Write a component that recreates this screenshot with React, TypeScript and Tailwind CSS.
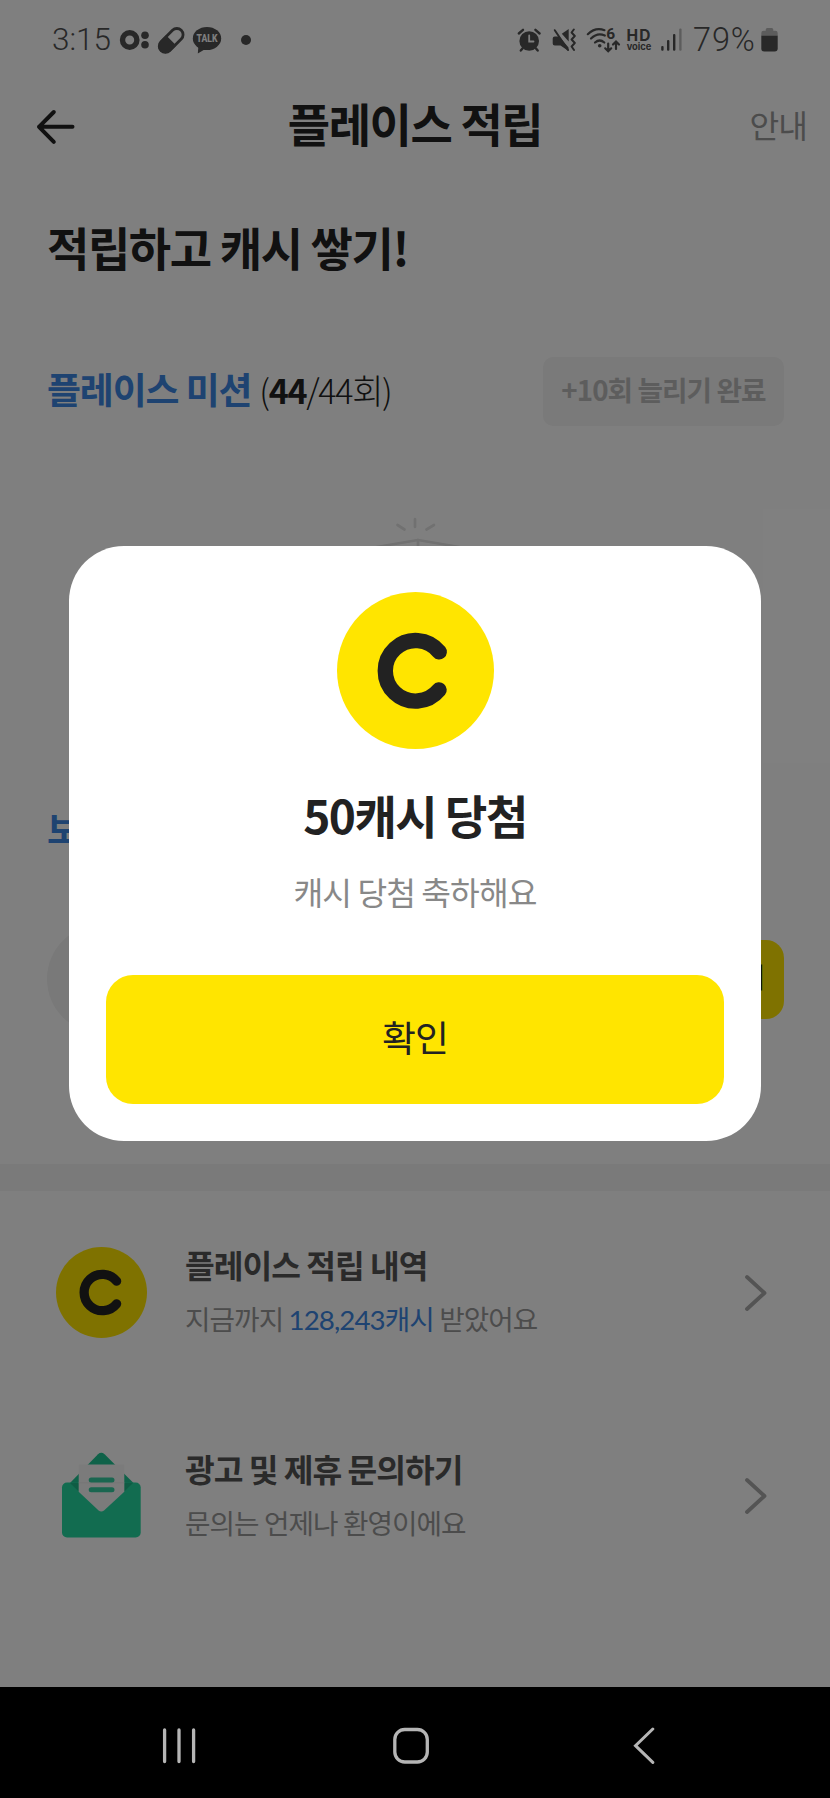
import type { ReactNode } from "react";

const menu = [
  {
    title: "플레이스 적립 내역",
    desc: (
      <>
        지금까지{" "}
        <span className="font-[Lato,'Noto_Sans_CJK_KR',sans-serif] text-[#3c86e2]">128,243캐시</span>{" "}
        받았어요
      </>
    ),
    icon: <CashIcon className="size-[91px]" small />,
  },
  {
    title: "광고 및 제휴 문의하기",
    desc: <>문의는 언제나 환영이에요</>,
    icon: <MailIcon />,
  },
];

function CashIcon({ className, small }: { className: string; small?: boolean }) {
  return (
    <svg viewBox="0 0 100 100" className={className} fill="none">
      <circle cx="50" cy="50" r="50" fill="#ffe500" />
      <path
        d={
          small
            ? "M66.6 37.6A20 20 0 1 0 66.6 62.4"
            : "M65.1 38.1A19.3 19.3 0 1 0 65 62.4"
        }
        stroke="#222"
        strokeWidth={small ? 10.2 : 9.8}
        strokeLinecap="round"
      />
    </svg>
  );
}

function MailIcon() {
  return (
    <svg viewBox="0 0 91 91" className="size-[91px]">
      <path d="M14 33 42 4.200Q45.300 1.500 48.600 4.200L77.500 33V50H14Z" fill="#1fc492" />
      <rect x="6" y="32.500" width="78.700" height="55" rx="5" fill="#25d8a1" />
      <path d="M14 33H22.700V41.500ZM77 33H68.300V41.500Z" fill="#1db888" />
      <path d="M22.700 14.500H68.300V41.800L48 60.500Q45.300 62.500 42.600 60.500L22.700 41.800Z" fill="#f6f6f6" />
      <path d="M22.700 32.800H68.300" stroke="#e9e9e9" strokeWidth="0.800" />
      <path d="M35.200 29.900H56M35.200 39.800H56" stroke="#35cda0" strokeWidth="5" strokeLinecap="round" />
    </svg>
  );
}

function StatusBar() {
  return (
    <div className="flex h-20 items-center pr-[51px] pl-[52px] font-[Roboto] tracking-normal text-[#505050]">
      <span className="w-[67px] text-[31.500px] font-light whitespace-nowrap">3:15</span>
      <svg width="30" height="26" viewBox="0 0 30 26" fill="currentColor">
        <circle cx="10.700" cy="13" r="7.200" fill="none" stroke="currentColor" strokeWidth="5.400" />
        <circle cx="26" cy="8.300" r="3.800" />
        <circle cx="26" cy="17.700" r="3.800" />
      </svg>
      <svg width="30" height="30" viewBox="0 0 30 30" className="ml-[7px]" fill="none">
        <g transform="rotate(45 15 15.300)">
          <rect x="9" y="1" width="12.400" height="28.600" rx="6.200" stroke="currentColor" strokeWidth="2.800" />
          <path d="M8 15.300H22.400V23.400A7.200 7.200 0 0 1 8 23.400Z" fill="currentColor" />
        </g>
      </svg>
      <svg width="30" height="30" viewBox="0 0 30 30" className="ml-1.5">
        <ellipse cx="15" cy="13.500" rx="14.200" ry="11.500" fill="currentColor" />
        <path d="M6.500 20 5.800 28.500 15 23Z" fill="currentColor" />
        <text x="15" y="17" textAnchor="middle" textLength="21" lengthAdjust="spacingAndGlyphs" fontSize="10" fontWeight="800" fill="#fff">
          TALK
        </text>
      </svg>
      <span className="ml-[19px] size-[9.500px] rounded-full bg-current" />

      <div className="ml-auto flex items-center">
        <svg width="26" height="27" viewBox="0 0 26 27" fill="none" stroke="currentColor" strokeLinecap="round">
          <circle cx="13.200" cy="14" r="9.800" fill="currentColor" stroke="none" />
          <path d="M2.800 6.500 7 2.800M23.600 6.500 19.400 2.800" strokeWidth="2.400" />
          <path d="M6.500 21.500 4.800 23.500M20 21.500 21.700 23.500" strokeWidth="2.400" />
          <path d="M13.200 8.500V14.500H17.500" stroke="#fff" strokeWidth="1.800" />
        </svg>
        <svg width="24" height="27" viewBox="0 0 24 27" className="ml-2.5" fill="currentColor">
          <path d="M2.800 9.500H7.200L16.500 20.500V24L8.500 18.500H2.800Q.7 18.500.7 16.500V11.500Q.7 9.500 2.800 9.500Z" />
          <path d="M9.800 6.700 16.700 2V14.500Z" />
          <path d="M2.800 3.200 16 23" stroke="currentColor" strokeWidth="2" strokeLinecap="round" />
          <path
            d="M21.800 2.500 19.600 5.500 22.800 9 19.600 12.500 22.800 16 19.600 19.500 22 23"
            fill="none"
            stroke="currentColor"
            strokeWidth="2"
            strokeLinecap="round"
            strokeLinejoin="round"
          />
        </svg>
        <svg width="35" height="35" viewBox="0 -4 35 35" className="ml-2.5" fill="none" stroke="currentColor" strokeWidth="2.200" strokeLinecap="round">
          <path d="M1.800 7.200Q9.500-.300 18.500 3.200M5 11.500Q11.500 5 18.800 8.500M9 15.500Q13.700 11.500 18.300 15.500" />
          <circle cx="13.700" cy="18.700" r="1.800" fill="currentColor" stroke="none" />
          <path d="M22.200 16.500V24M19.200 21.300 22.200 24.300 25.200 21.300" />
          <path d="M30 22V14.800M27 17.500 30 14.500 33 17.500" />
          <text x="20.300" y="12.200" fontSize="15.500" fontWeight="700" fill="currentColor" stroke="none">
            6
          </text>
        </svg>
        <div className="ml-1 flex w-7 flex-col items-center font-[Inter] font-bold">
          <span className="text-[15.500px] leading-[13px] tracking-[1px]">HD</span>
          <span className="text-[9.300px] leading-[10px]">voice</span>
        </div>
        <svg width="22" height="27" viewBox="0 0 22 27" className="ml-[7px]" fill="currentColor">
          <rect x="1.200" y="19" width="2.400" height="4.800" rx="1" />
          <rect x="7" y="13" width="2.400" height="10.800" rx="1" />
          <rect x="13" y="7" width="2.400" height="16.800" rx="1" />
          <rect x="19.200" y="1.500" width="2.400" height="22.300" rx="1" opacity=".4" />
        </svg>
        <span className="ml-[11px] w-[67px] text-[32.500px] font-light tracking-[0.900px] whitespace-nowrap">79%</span>
        <svg width="19" height="27" viewBox="0 0 19 27" fill="currentColor">
          <path d="M5.700 3.700V2.500Q5.700 1 7.200 1H11.800Q13.300 1 13.300 2.500V3.700H15.500Q17.700 3.700 17.700 6V9H1.300V6Q1.300 3.700 3.500 3.700Z" opacity=".4" />
          <path d="M1.300 8.700H17.700V21.500Q17.700 24.500 14.700 24.500H4.300Q1.300 24.500 1.300 21.500Z" />
        </svg>
      </div>
    </div>
  );
}

function Header() {
  return (
    <header className="grid h-[90px] grid-cols-[1fr_auto_1fr] items-center px-[23px]">
      <svg width="40" height="36" viewBox="0 0 40 36" className="mt-1 ml-[13px]" fill="none" stroke="#222" strokeWidth="4" strokeLinecap="round" strokeLinejoin="round">
        <path d="M17.800 3 3 17.800 17.800 32.800M3 17.800H36.500" />
      </svg>
      <h1 className="pb-1.5 text-[46px] leading-none font-bold tracking-[-1.400px] text-[#222]">플레이스 적립</h1>
      <span className="pb-0.5 text-right text-[32.300px] leading-none text-[#999]">안내</span>
    </header>
  );
}

function EmptyBox() {
  return (
    <svg width="140" height="140" viewBox="0 0 140 140" className="mx-auto mt-[89px]" fill="none" stroke="#e2e2e2" strokeWidth="2.700" strokeLinecap="round" strokeLinejoin="round">
      <path d="M70 4V12M52.500 10 59.500 14.500M89 10 81.500 14.500" />
      <path d="M73 25 20 34V104L73 124 126 104V34Z" />
      <path d="M73 25V60M20 34 73 60 126 34" />
    </svg>
  );
}

function MenuRow({ title, desc, icon }: { title: string; desc: ReactNode; icon: ReactNode }) {
  return (
    <li className="flex h-[203px] items-center pr-[62px] pl-14">
      {icon}
      <div className="ml-[38px] flex-1 pb-0.5">
        <p className="text-[32.300px] leading-[54px] font-bold tracking-[-1px] text-[#555]">{title}</p>
        <p className="text-[27.700px] leading-[54px] text-[#999]">{desc}</p>
      </div>
      <svg width="24" height="38" viewBox="0 0 24 38" fill="none" stroke="#a8a8a8" strokeWidth="3.800" strokeLinecap="round" strokeLinejoin="round">
        <path d="M3 3 20.500 19 3 35" />
      </svg>
    </li>
  );
}

function RewardDialog() {
  return (
    <div className="absolute inset-0 flex flex-col items-center bg-black/50">
      <div
        role="dialog"
        className="mt-[546px] flex h-[595px] w-[692px] flex-col items-center rounded-[55px] bg-white px-[37px] pt-[46px]"
      >
        <CashIcon className="size-[157px] shrink-0" />
        <h2 className="mt-[35px] text-[46px] leading-[60px] font-bold tracking-[-1.500px] text-[#222]">
          50캐시 당첨
        </h2>
        <p className="mt-[27px] text-[32.300px] leading-10 text-[#888]">캐시 당첨 축하해요</p>
        <button className="mt-16 h-[129px] w-full rounded-[27px] bg-[#ffe500] pb-1.5 text-[36.900px] text-[#222]">
          확인
        </button>
      </div>
    </div>
  );
}

function NavBar() {
  return (
    <nav className="flex h-[111px] items-center bg-black pt-1.5 pl-[162px] text-[#b5b5b5]">
      <svg width="34" height="38" viewBox="0 0 34 38" fill="none" stroke="currentColor" strokeWidth="3.300" strokeLinecap="round">
        <path d="M2.600 3V34.500M17 3V34.500M31.600 3V34.500" />
      </svg>
      <svg width="38" height="38" viewBox="0 0 38 38" className="ml-[196px]" fill="none" stroke="currentColor" strokeWidth="3.300">
        <rect x="2.800" y="2.500" width="32.500" height="32.500" rx="10" />
      </svg>
      <svg width="24" height="38" viewBox="0 0 24 38" className="ml-[202px]" fill="none" stroke="currentColor" strokeWidth="3" strokeLinecap="round">
        <path d="M20.800 2 3.500 18.700 20.800 35.400" />
      </svg>
    </nav>
  );
}

export default function App() {
  return (
    <div className="w-[830px] overflow-hidden bg-white font-['Noto_Sans_CJK_KR',sans-serif]">
      <div className="relative h-[1687px] tracking-[-0.920px]">
        <StatusBar />
        <Header />
        <main>
          <h2 className="mt-[46px] pl-[47px] text-[46px] leading-[60px] font-bold tracking-[-1.400px] text-[#222]">
            적립하고 캐시 쌓기!
          </h2>

          <section className="mt-[81px] h-[444px]">
            <div className="flex h-[69px] items-center justify-between pr-[46px] pl-[47px]">
              <p className="pb-1.5 text-[34px] leading-none tracking-[-1.300px] text-[#222]">
                <span className="mr-2 text-[36.900px] font-bold tracking-[-1.100px] text-[#3c86e2]">플레이스 미션</span>
                <span className="font-light">
                  (<b className="font-bold">44</b>/44회)
                </span>
              </p>
              <button className="h-[69px] w-[241px] rounded-[10px] bg-[#f4f4f4] pb-1 text-[27.700px] font-bold text-[#bbb]">
                +10회 늘리기 완료
              </button>
            </div>
            <EmptyBox />
          </section>

          <section className="h-[363px] pr-[46px] pl-[47px]">
            <h3 className="text-[36.900px] leading-[54px] font-bold text-[#3c86e2]">보너스 미션</h3>
            <div className="mt-[70px] flex items-center justify-between">
              <div className="size-[108px] rounded-full bg-[#f2f2f2]" />
              <button className="h-[79px] w-[130px] rounded-[18px] bg-[#ffe500] pr-5 pb-1 text-right text-[27.700px] font-bold text-[#222]">
                받기
              </button>
            </div>
          </section>

          <div className="h-[27px] bg-[#f4f4f4]" />

          <ul>
            {menu.map((m) => (
              <MenuRow key={m.title} {...m} />
            ))}
          </ul>
        </main>
        <RewardDialog />
      </div>
      <NavBar />
    </div>
  );
}
